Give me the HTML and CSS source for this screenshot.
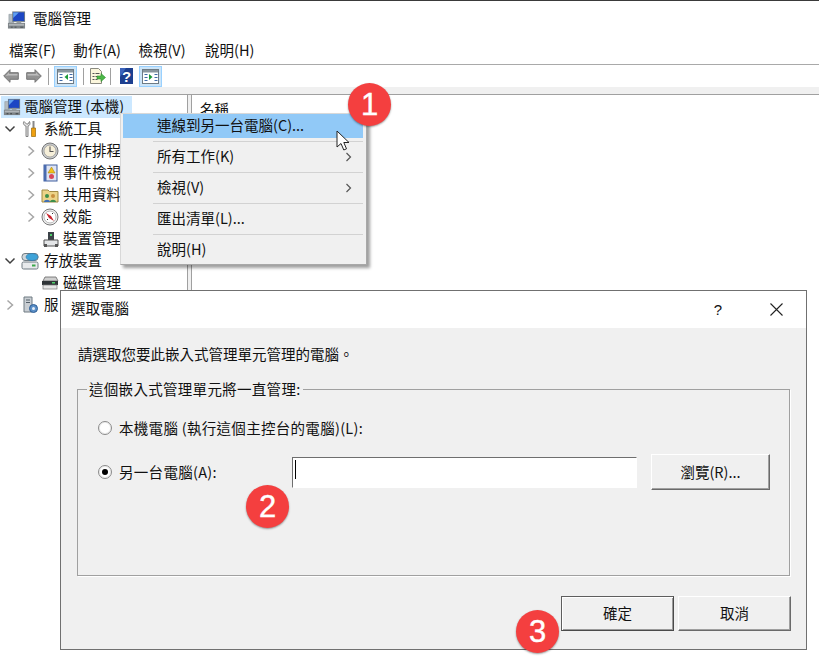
FILE: index.html
```html
<!DOCTYPE html>
<html lang="zh-Hant">
<head>
<meta charset="utf-8">
<title>電腦管理</title>
<link rel="stylesheet" href="styles.css">
</head>
<body>
<svg class="defs" width="0" height="0" aria-hidden="true">
  <defs>
    <symbol id="computer" viewBox="0 0 20 20">
      <path d="M2 4h5v9H2z" fill="#b4bbc1" stroke="#8b949b" stroke-width=".6"/>
      <rect x="5.500" y="1" width="13.500" height="11" fill="#6f7c88"/>
      <rect x="6.500" y="2" width="11.500" height="9" fill="#1c46c4"/>
      <path d="M6.500 2h6l-6 6z" fill="#5f9ff0"/>
      <path d="M10 11h5v2h-5z" fill="#8d9499"/>
      <rect x="1" y="13" width="18" height="6" fill="#7e8488"/>
      <rect x="2" y="14" width="16" height="2" fill="#b0b5b9"/>
      <path d="M4 17h2v1H4zM8 17h2v1H8zM14 17h3v1h-3z" fill="#3d4245"/>
    </symbol>
    <symbol id="chev" viewBox="0 0 10 12">
      <path d="M2.500 1.500 7.500 6l-5 4.500" fill="none" stroke="#a6a6a6" stroke-width="1.500"/>
    </symbol>
    <symbol id="chevdown" viewBox="0 0 12 10">
      <path d="M1.500 2.500 6 7l4.500-4.500" fill="none" stroke="#404040" stroke-width="1.500"/>
    </symbol>
    <symbol id="arrow" viewBox="0 0 16 14">
      <path d="M.7 7 7 .7v3h8.300v6.600H7v3z" fill="#929292" stroke="#757575"/>
      <path d="M2.500 7 6 3.500V5h8.500v1.500H5.500z" fill="#bdbdbd"/>
    </symbol>
    <symbol id="panel" viewBox="0 0 17 17">
      <rect x=".5" y="1.500" width="16" height="14" fill="#fff" stroke="#6f7b84"/>
      <rect x="1" y="2" width="15" height="2.500" fill="#8a969e"/>
      <path d="M2.500 6h3v1h-3zM2.500 9h3v1h-3zM2.500 12h3v1h-3zM12.500 6h3v1h-3zM12.500 9h3v1h-3zM12.500 12h3v1h-3z" fill="#3f6aa8"/>
    </symbol>
  </defs>
</svg>

<div class="page">
  <div class="mmc">
    <div class="titlebar">
      <svg class="ico-title"><use href="#computer"/></svg>
      <span class="lift">電腦管理</span>
    </div>
    <div class="menubar">
      <span>檔案(F)</span><span>動作(A)</span><span class="menu-wide">檢視(V)</span><span>說明(H)</span>
    </div>
    <div class="toolbar">
      <svg class="tb-arrow"><use href="#arrow"/></svg>
      <svg class="tb-arrow tb-flip"><use href="#arrow"/></svg>
      <i class="tb-sep"></i>
      <span class="tb-btn">
        <svg class="tb-ico" viewBox="0 0 17 17"><use href="#panel"/><path d="M11 6v6L7.500 9z" fill="#1f9a3a"/></svg>
      </span>
      <i class="tb-sep"></i>
      <svg class="tb-doc" viewBox="0 0 18 18">
        <path d="M2.500 1.500h8l3 3v12h-11z" fill="#fbf6dc" stroke="#8a8a80"/>
        <path d="M4.500 6h2v1h-2zM7.500 6h4v1h-4zM4.500 9h2v1h-2zM7.500 9h2v1h-2zM4.500 12h2v1h-2zM7.500 12h2v1h-2z" fill="#555"/>
        <path d="M9 9h4V6.500l4.500 4-4.500 4V12H9z" fill="#4cb848" stroke="#2b8c2b" stroke-width=".6"/>
      </svg>
      <i class="tb-sep"></i>
      <svg class="tb-help" viewBox="0 0 13 16">
        <rect width="13" height="16" fill="#1d3f8f"/>
        <path d="M0 0h6L0 9z" fill="#3c63bb"/>
        <text x="6.500" y="13.500" class="tb-help-q">?</text>
      </svg>
      <span class="tb-btn tb-btn-last">
        <svg class="tb-ico" viewBox="0 0 17 17"><use href="#panel"/><path d="M7 6v6l3.500-3z" fill="#1f9a3a"/></svg>
      </span>
    </div>
    <div class="band"></div>
    <div class="panes">
      <div class="tree">
        <div class="row lvl0 selected">
          <svg class="ico"><use href="#computer"/></svg><span>電腦管理 (本機)</span>
        </div>
        <div class="row lvl1">
          <svg class="exp"><use href="#chevdown"/></svg>
          <svg class="ico" viewBox="0 0 18 18">
            <path d="M3 1.500c-1.500 2 0 4 2 4.500v10.500h2V6c2-.5 2.500-2.500 1.500-4.500L7 4H5.500z" fill="#e4e4e4" stroke="#777" stroke-width=".9"/>
            <rect x="11.500" y="1" width="2" height="7" fill="#888"/>
            <path d="M10.500 8h4v8.500h-4z" fill="#efa010" stroke="#9a6a08" stroke-width=".7"/>
          </svg>
          <span>系統工具</span>
        </div>
        <div class="row lvl2">
          <svg class="exp"><use href="#chev"/></svg>
          <svg class="ico" viewBox="0 0 18 18">
            <circle cx="9" cy="9" r="8" fill="#c9ccce" stroke="#777"/>
            <circle cx="9" cy="9" r="6" fill="#f6efd9" stroke="#8f8f8f" stroke-width=".7"/>
            <path d="M9 4.500V9.500h3.500" fill="none" stroke="#555" stroke-width="1.100"/>
          </svg>
          <span>工作排程器</span>
        </div>
        <div class="row lvl2">
          <svg class="exp"><use href="#chev"/></svg>
          <svg class="ico" viewBox="0 0 18 18">
            <rect x="3" y="1" width="13" height="16" fill="#dfe4f2" stroke="#3f5f9f"/>
            <rect x="3" y="1" width="2.500" height="16" fill="#4a6cb0"/>
            <path d="M10.500 3 14 9H7z" fill="#f3c218" stroke="#9a7a10" stroke-width=".5"/>
            <circle cx="10.500" cy="12.500" r="2.500" fill="#d8485a"/>
          </svg>
          <span>事件檢視器</span>
        </div>
        <div class="row lvl2">
          <svg class="exp"><use href="#chev"/></svg>
          <svg class="ico" viewBox="0 0 18 18">
            <path d="M1 4h6l1.500 1.500H17V16H1z" fill="#ecd488" stroke="#a08a45"/>
            <circle cx="6" cy="10" r="2" fill="#3d8f4a"/>
            <path d="M3 16c0-3 6-3 6 0z" fill="#3f6fb5"/>
            <circle cx="12" cy="10" r="2" fill="#c9903f"/>
            <path d="M9 16c0-3 6-3 6 0z" fill="#3d8f4a"/>
          </svg>
          <span>共用資料夾</span>
        </div>
        <div class="row lvl2">
          <svg class="exp"><use href="#chev"/></svg>
          <svg class="ico" viewBox="0 0 18 18">
            <circle cx="9" cy="9" r="8" fill="#f2f2f2" stroke="#777"/>
            <circle cx="9" cy="9" r="6" fill="#fff" stroke="#999" stroke-width=".7"/>
            <path d="M5 5 8 10l5 3-3-5z" fill="#c8232c"/>
            <path d="M7 11l-1 1M11 6l1-1" stroke="#333"/>
          </svg>
          <span>效能</span>
        </div>
        <div class="row lvl2">
          <i class="exp"></i>
          <svg class="ico" viewBox="0 0 18 18">
            <rect x="7" y="2" width="6" height="8" fill="#3c4348"/>
            <rect x="9" y="4" width="2" height="2" fill="#4fd06a"/>
            <path d="M3 10h14v6H3z" fill="#e4e6e8" stroke="#555"/>
            <rect x="3" y="14" width="3" height="3" fill="#555"/>
            <rect x="14" y="14" width="3" height="3" fill="#555"/>
          </svg>
          <span>裝置管理員</span>
        </div>
        <div class="row lvl1">
          <svg class="exp"><use href="#chevdown"/></svg>
          <svg class="ico" viewBox="0 0 18 18">
            <rect x="1" y="1.500" width="16" height="7" rx="3" fill="#cfd6da" stroke="#6f7b82"/>
            <ellipse cx="11" cy="5" rx="6" ry="3.500" fill="#3fa3d8" stroke="#2a76a8" stroke-width=".6"/>
            <rect x="1" y="10" width="16" height="7" rx="1.500" fill="#e8eaec" stroke="#6f7b82"/>
            <rect x="11" y="12.500" width="3.500" height="2" fill="#3aa84a"/>
          </svg>
          <span>存放裝置</span>
        </div>
        <div class="row lvl2">
          <i class="exp"></i>
          <svg class="ico" viewBox="0 0 18 18">
            <path d="M2 7 4 3h11l2 4z" fill="#cfcfcf" stroke="#666" stroke-width=".8"/>
            <rect x="1" y="7" width="16" height="4" fill="#2f3437"/>
            <rect x="11" y="8" width="3" height="1.500" fill="#4fd06a"/>
            <rect x="2" y="11" width="14" height="4" fill="#e6e6e6" stroke="#777" stroke-width=".7"/>
          </svg>
          <span>磁碟管理</span>
        </div>
        <div class="row lvl1">
          <svg class="exp"><use href="#chev"/></svg>
          <svg class="ico" viewBox="0 0 18 18">
            <path d="M3 1h8v15H3z" fill="#c9ced3" stroke="#6f7b82"/>
            <path d="M5 3.500h4v1H5zM5 6h4v1H5z" fill="#55606a"/>
            <circle cx="12.500" cy="12.500" r="4" fill="#5b8fc7" stroke="#2f5f95"/>
            <circle cx="12.500" cy="12.500" r="1.500" fill="#e8f0f8"/>
          </svg>
          <span>服</span>
        </div>
      </div>
      <div class="splitter"></div>
      <div class="list"><div class="list-head">名稱</div></div>
    </div>
  </div>

  <div class="ctx">
    <div class="ctx-item active">連線到另一台電腦(C)...</div>
    <i class="ctx-sep"></i>
    <div class="ctx-item">所有工作(K)<svg class="ctx-chev" viewBox="0 0 10 12"><path d="M2.500 2 6.500 6l-4 4" fill="none" stroke="#555" stroke-width="1.200"/></svg></div>
    <i class="ctx-sep"></i>
    <div class="ctx-item">檢視(V)<svg class="ctx-chev" viewBox="0 0 10 12"><path d="M2.500 2 6.500 6l-4 4" fill="none" stroke="#555" stroke-width="1.200"/></svg></div>
    <i class="ctx-sep"></i>
    <div class="ctx-item">匯出清單(L)...</div>
    <i class="ctx-sep"></i>
    <div class="ctx-item">說明(H)</div>
  </div>

  <svg class="cursor" viewBox="0 0 14 22">
    <path d="M1 1v16l4-3.500 2.800 6.500 2.700-1.200L7.800 12.500H13z" fill="#fff" stroke="#222" stroke-width="1"/>
  </svg>

  <div class="dialog">
    <div class="dlg-title">
      <span class="dlg-name lift">選取電腦</span>
      <span class="dlg-q">?</span>
      <svg class="dlg-x" viewBox="0 0 13 13"><path d="M.5.500l12 12M12.500.500l-12 12" stroke="#222" stroke-width="1.100" fill="none"/></svg>
    </div>
    <div class="dlg-body">
      <p class="dlg-msg">請選取您要此嵌入式管理單元管理的電腦。</p>
      <fieldset class="group">
        <legend>這個嵌入式管理單元將一直管理:</legend>
        <div class="opt opt-first">
          <span class="radio"></span>
          <span class="opt-text">本機電腦 (執行這個主控台的電腦)(L):</span>
        </div>
        <div class="opt">
          <span class="radio on"></span>
          <span class="opt-text opt-label">另一台電腦(A):</span>
          <span class="input"><i class="caret"></i></span>
          <span class="btn btn-browse">瀏覽(R)...</span>
        </div>
      </fieldset>
      <div class="actions">
        <span class="btn btn-main btn-default">確定</span>
        <span class="btn btn-main">取消</span>
      </div>
    </div>
  </div>

  <div class="badge b1">1</div>
  <div class="badge b2">2</div>
  <div class="badge b3">3</div>
</div>
</body>
</html>
```

FILE: styles.css
```css
* { box-sizing: border-box; }
html, body { margin: 0; padding: 0; background: #fff; }
body { font-family: "Noto Sans CJK TC", "Liberation Sans", sans-serif; font-size: 14.5px; color: #111; }
.defs { position: absolute; }
.page { position: relative; width: 819px; height: 669px; overflow: hidden; background: #fff; }
.lift { padding-bottom: 4px; }

.mmc { border-top: 1px solid #3a3a3a; }
.titlebar { display: flex; align-items: center; height: 37px; padding-left: 7px; gap: 7px; }
.ico-title { width: 19px; height: 20px; }
.menubar { display: flex; align-items: center; gap: 17.500px; height: 26px; padding: 0 0 3px 9px; }
.menu-wide { margin-right: 2px; }
.toolbar { display: flex; align-items: center; height: 23px; padding-left: 3px; border-top: 1px solid #a9a9a9; }
.tb-arrow { width: 16px; height: 14px; margin-right: 7px; }
.tb-flip { transform: scaleX(-1); margin-right: 6px; }
.tb-sep { width: 1px; height: 17px; background: #a0a0a0; margin-right: 5px; }
.tb-btn { display: flex; align-items: center; justify-content: center; width: 23px; height: 21px; background: #cce4f7; border: 1px solid #99d1ff; margin-right: 6px; }
.tb-btn-last { margin-right: 0; }
.tb-ico { width: 17px; height: 17px; }
.tb-doc { width: 18px; height: 18px; margin: 0 4px 0 -1px; }
.tb-help { width: 13px; height: 16px; margin: 0 6px 0 4px; }
.tb-help-q { font-family: "Liberation Sans", sans-serif; font-size: 15px; font-weight: 700; fill: #fff; text-anchor: middle; }
.band { height: 7px; background: #f0f0f0; }

.panes { display: flex; height: 225px; border-top: 1px solid #a0a0a0; }
.tree { width: 188px; padding-top: 1px; border-right: 1px solid #a0a0a0; flex: none; }
.row { display: flex; align-items: center; height: 22px; white-space: nowrap; overflow: hidden; }
.row span { padding-bottom: 4px; }
.row .ico { width: 18px; height: 18px; flex: none; }
.exp { display: block; flex: none; height: 12px; }
.lvl0 { width: 131px; margin-left: 1px; padding-left: 2px; gap: 3px; }
.lvl1 { padding-left: 4px; }
.lvl1 .exp { width: 12px; margin-right: 5px; }
.lvl1 .ico { margin-right: 5px; }
.lvl2 { padding-left: 26px; }
.lvl2 .exp { width: 10px; margin-right: 5px; }
.lvl2 .ico { margin-right: 4px; }
.selected { background: #cce8ff; }
.splitter { width: 3px; background: #f0f0f0; flex: none; }
.list { flex: 1; border-left: 1px solid #a0a0a0; }
.list-head { height: 27px; line-height: 27px; padding-left: 8px; }

.ctx { position: absolute; left: 120px; top: 113px; width: 247px; height: 152px; padding: 0 3px 0 2px; background: #f0f0f0; border: 1px solid #a8a8a8; border-top-color: #d8d8d8; border-left-color: #d8d8d8; box-shadow: 3px 3px 3px rgba(0, 0, 0, .38); }
.ctx-item { position: relative; display: flex; align-items: center; height: 24px; padding: 0 0 4px 34px; }
.ctx-item.active { background: #91c9f7; }
.ctx-sep { display: block; height: 1px; margin: 3px 0 3px 30px; background: #d2d2d2; }
.ctx-chev { position: absolute; right: 9px; top: 6px; width: 10px; height: 12px; }
.cursor { position: absolute; left: 336px; top: 130px; width: 14px; height: 22px; }

.dialog { position: absolute; left: 60px; top: 290px; width: 747px; height: 360px; border: 1px solid #707070; background: #f0f0f0; }
.dlg-title { display: flex; align-items: center; height: 37px; padding-left: 10px; background: #fff; }
.dlg-name { flex: 1; }
.dlg-q { font-family: "Liberation Sans", sans-serif; font-size: 15px; margin-right: 48px; }
.dlg-x { width: 13px; height: 13px; margin-right: 23px; }
.dlg-body { padding: 17px 16px 0; }
.dlg-msg { margin: 0 0 14px 1px; height: 20px; line-height: 18px; }
.group { height: 197px; margin: 0; padding: 17px 0 0 20px; border: 1px solid #a0a0a0; box-shadow: 1px 1px 0 #fff; }
.group legend { height: 20px; line-height: 20px; padding: 0 2px; margin-left: -11px; letter-spacing: .3px; }
.opt { display: flex; align-items: center; gap: 7px; height: 24px; }
.opt-first { margin-bottom: 14px; }
.opt:last-child { height: 36px; }
.opt-text { letter-spacing: .3px; padding-bottom: 2px; }
.opt-label { width: 166px; }
.radio { position: relative; width: 14px; height: 14px; border-radius: 50%; background: #fff; border: 1.500px solid #8a8a8a; flex: none; box-shadow: inset 0 0 0 1px #ececec; }
.radio.on::after { content: ""; position: absolute; left: 2.500px; top: 2.500px; width: 6px; height: 6px; border-radius: 50%; background: #000; }
.input { display: block; width: 345px; height: 31px; padding: 2px 0 0 2px; background: #fff; border: 1px solid; border-color: #6e6e6e #fff #fff #6e6e6e; margin-right: 7px; }
.caret { display: block; width: 1px; height: 19px; background: #000; }
.btn { display: flex; align-items: center; justify-content: center; padding-bottom: 2px; background: #f0f0f0; border: 1px solid; border-color: #fff #6a6a6a #6a6a6a #fff; box-shadow: inset -1px -1px 0 #a0a0a0; }
.btn-browse { width: 119px; height: 36px; }
.actions { display: flex; justify-content: flex-end; gap: 4px; margin: 20px -1px 0 0; }
.btn-main { width: 113px; height: 35px; }
.btn-default { border-color: #5e5e5e #4a4a4a #4a4a4a #5e5e5e; box-shadow: inset 1px 1px 0 #fff, inset -1px -1px 0 #9a9a9a; }

.badge { position: absolute; width: 43px; height: 43px; border-radius: 50%; background: #f43f3f; color: #fff; font-family: "Liberation Sans", sans-serif; font-size: 31px; line-height: 43px; text-align: center; -webkit-text-stroke: .4px #fff; box-shadow: 0 1px 2px rgba(0, 0, 0, .4); }
.b1 { left: 348px; top: 83px; }
.b2 { left: 246px; top: 485px; }
.b3 { left: 516px; top: 610px; }
```
